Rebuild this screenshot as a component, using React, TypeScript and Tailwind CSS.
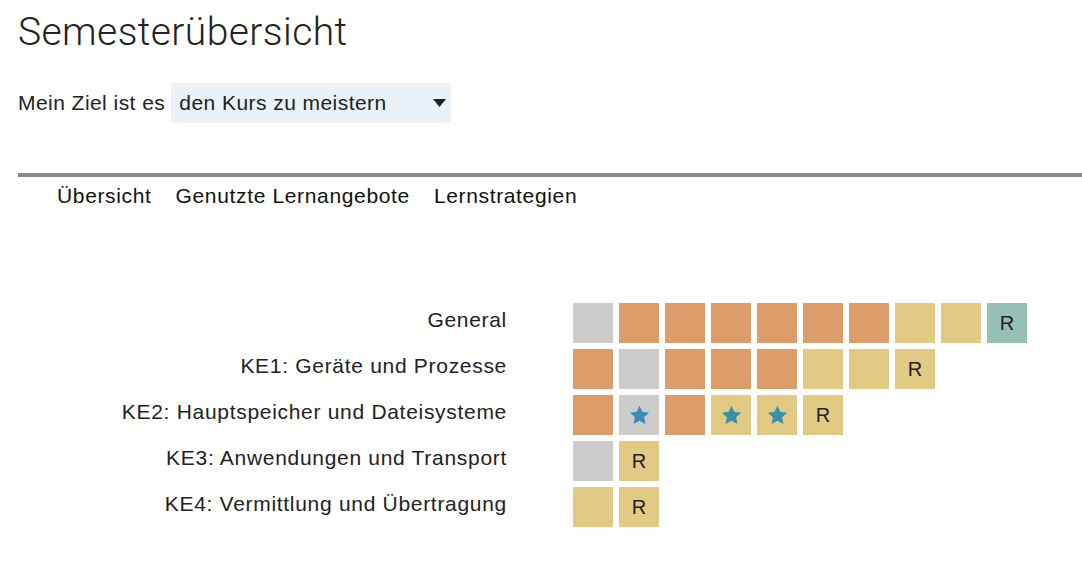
import React from "react";

type Cell = { c: "g" | "o" | "y" | "t"; m?: "R" | "S" };

const colors: Record<string, string> = {
  g: "bg-[#cccccc]",
  o: "bg-[#dc9d6b]",
  y: "bg-[#e2c984]",
  t: "bg-[#96c0b6]",
};

const rows: { label: string; cells: Cell[] }[] = [
  {
    label: "General",
    cells: [
      { c: "g" }, { c: "o" }, { c: "o" }, { c: "o" }, { c: "o" }, { c: "o" }, { c: "o" },
      { c: "y" }, { c: "y" }, { c: "t", m: "R" },
    ],
  },
  {
    label: "KE1: Geräte und Prozesse",
    cells: [
      { c: "o" }, { c: "g" }, { c: "o" }, { c: "o" }, { c: "o" }, { c: "y" }, { c: "y" },
      { c: "y", m: "R" },
    ],
  },
  {
    label: "KE2: Hauptspeicher und Dateisysteme",
    cells: [
      { c: "o" }, { c: "g", m: "S" }, { c: "o" }, { c: "y", m: "S" }, { c: "y", m: "S" },
      { c: "y", m: "R" },
    ],
  },
  { label: "KE3: Anwendungen und Transport", cells: [{ c: "g" }, { c: "y", m: "R" }] },
  { label: "KE4: Vermittlung und Übertragung", cells: [{ c: "y" }, { c: "y", m: "R" }] },
];

function Star() {
  return (
    <svg width="21" height="20" viewBox="0 0 24 23">
      <path
        d="M12 0.8l3.3 7.1 7.7 0.9-5.7 5.3 1.5 7.7L12 18l-6.8 3.8 1.5-7.7L1 8.8l7.7-0.9z"
        fill="#3b8fab"
      />
    </svg>
  );
}

export default function App() {
  return (
    <div
      className="w-[1082px] h-[568px] bg-white text-[#222] overflow-hidden"
      style={{ fontFamily: '"Liberation Sans", Arial, sans-serif' }}
    >
      <div className="pl-[18px]">
        <h1
          className="pt-[10px] text-[39px] leading-[44px] text-[#222] tracking-[0.4px]"
          style={{ fontFamily: 'Roboto, "Liberation Sans", sans-serif', fontWeight: 300 }}
        >
          Semesterübersicht
        </h1>
        <div className="mt-[29px] flex items-center h-[40px]">
          <span className="text-[21px] tracking-[0.45px] text-[#222]">Mein Ziel ist es</span>
          <div className="ml-[6px] w-[280px] h-[40px] bg-[#e9f2f9] flex items-center justify-between pl-[8px] pr-[5px]">
            <span className="text-[21px] tracking-[0.45px] text-[#222]">den Kurs zu meistern</span>
            <svg width="13" height="8" viewBox="0 0 13 8">
              <path d="M0 0h13L6.5 8z" fill="#222" />
            </svg>
          </div>
        </div>
        <div className="mt-[50px] h-[4px] bg-[#868a8c]" />
        <div className="flex pl-[39px] h-[38px] items-center text-[21px] tracking-[0.65px] text-[#111] gap-[24px]">
          <span>Übersicht</span>
          <span>Genutzte Lernangebote</span>
          <span>Lernstrategien</span>
        </div>
      </div>
      <div className="mt-[88px] flex flex-col gap-[6px]">
        {rows.map((r) => (
          <div key={r.label} className="flex items-center h-[40px]">
            <div className="w-[507px] pb-[7px] text-right text-[21px] tracking-[0.7px] text-[#222] leading-[24px] whitespace-nowrap">
              {r.label}
            </div>
            <div className="ml-[66px] flex gap-[6px]">
              {r.cells.map((cell, i) => (
                <div
                  key={i}
                  className={`w-[40px] h-[40px] ${colors[cell.c]} flex items-center justify-center text-[20px] text-[#222]`}
                >
                  {cell.m === "R" ? "R" : cell.m === "S" ? <Star /> : null}
                </div>
              ))}
            </div>
          </div>
        ))}
      </div>
    </div>
  );
}
